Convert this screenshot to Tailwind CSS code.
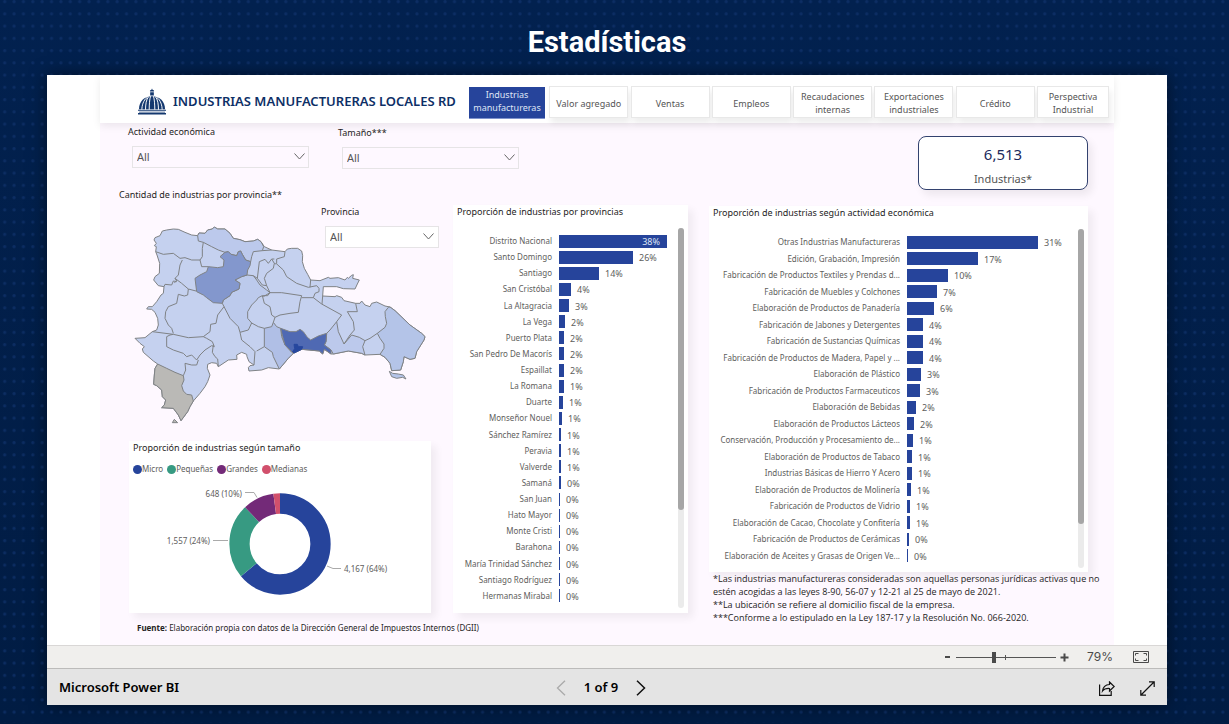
<!DOCTYPE html>
<html lang="es">

<head>
    <meta charset="UTF-8">
    <meta name="viewport" content="width=device-width, initial-scale=1.0">
    <title>Estadísticas</title>
    <script src="https://cdn.jsdelivr.net/npm/@tailwindcss/browser@4"></script>
</head>

<body class="bg-[#02204c] font-['Noto_Sans',sans-serif] text-[#252423]">

    <!-- dotted page background -->
    <svg class="absolute inset-0 -z-10 h-full w-full" aria-hidden="true">
        <defs>
            <linearGradient id="shade" x1="0" y1="0" x2="0" y2="1">
                <stop offset="0" stop-color="#02214f" />
                <stop offset="1" stop-color="#011c43" />
            </linearGradient>
            <pattern id="dots" width="9.37" height="12.25" patternUnits="userSpaceOnUse">
                <circle cx="4.7" cy="1.6" r="1.6" fill="#10316a" fill-opacity=".75" />
            </pattern>
        </defs>
        <rect width="100%" height="100%" fill="url(#shade)" />
        <rect width="100%" height="100%" fill="url(#dots)" y="-1" />
    </svg>

    <div class="min-h-screen pl-[47px] pr-[62px]">
        <h1 class="pt-6 pb-[15px] text-center font-[Roboto] text-[29px] leading-9 font-bold text-white">Estadísticas</h1>

        <div class="bg-white shadow-[0_0_16px_rgba(0,0,0,0.5)]">
            <div class="mx-[53px]">

                <!-- report header -->
                <header class="relative flex h-12 pl-[38px] pr-[5px] shadow-[0_3px_8px_rgba(0,0,0,0.08)]">
                    <svg class="mt-[13px] h-[27px] w-[28px] shrink-0" viewBox="0 0 29 27" fill="#14386f" aria-hidden="true">
                        <path d="M14.500 0l.7 1.300h-1.400zM12.400 2.200q2.100-1.600 4.200 0v1H12.400zM12.600 3.800h3.800v3.600h-3.800z" />
                        <path d="M1 21.500C1 13.500 6.500 8 14.500 8S28 13.500 28 21.500z" />
                        <path d="M0 22h29v1.200H0zM1 24h27v.8H1zM0 25.500h29V27H0z" />
                        <g fill="none" stroke="#fff" stroke-width="1">
                            <path d="M13 8C12 11 11.600 17 11.600 22M16 8c1 3 1.400 9 1.400 14" />
                            <path d="M11 8.500C8.500 11 7.800 17 7.800 22M18 8.500c2.500 2.500 3.200 8.500 3.200 13.500M9.500 9.300C5.500 12 4 18 4 22M19.500 9.300c4 2.700 5.500 8.700 5.500 12.700" />
                        </g>
                    </svg>
                    <h2 class="mt-4 ml-[7px] w-[296px] shrink-0 whitespace-nowrap text-[13px] leading-5 font-semibold text-[#0d2f66]">INDUSTRIAS MANUFACTURERAS LOCALES RD</h2>
                    <nav class="mt-[11px] flex h-8 flex-1 justify-between text-[9px] leading-[13px] text-[#555]">
                        <button class="mt-px mr-[2px] h-8 w-[76px] border-b border-[#7f93cc] bg-[#26449b] pb-1 text-[#dfe4f5]">Industrias<br>manufactureras</button>
                        <button class="w-[79px] border border-[#e8e8e8] bg-white pt-[2px] shadow-[2px_5px_6px_rgba(0,0,0,0.07)]">Valor agregado</button>
                        <button class="w-[79px] border border-[#e8e8e8] bg-white pt-[2px] shadow-[2px_5px_6px_rgba(0,0,0,0.07)]">Ventas</button>
                        <button class="w-[79px] border border-[#e8e8e8] bg-white pt-[2px] shadow-[2px_5px_6px_rgba(0,0,0,0.07)]">Empleos</button>
                        <button class="w-[79px] border border-[#e8e8e8] bg-white pt-[2px] shadow-[2px_5px_6px_rgba(0,0,0,0.07)]">Recaudaciones<br>internas</button>
                        <button class="w-[79px] border border-[#e8e8e8] bg-white pt-[2px] shadow-[2px_5px_6px_rgba(0,0,0,0.07)]">Exportaciones<br>industriales</button>
                        <button class="w-[79px] border border-[#e8e8e8] bg-white pt-[2px] shadow-[2px_5px_6px_rgba(0,0,0,0.07)]">Crédito</button>
                        <button class="w-[72px] border border-[#e8e8e8] bg-white pt-[2px] shadow-[2px_5px_6px_rgba(0,0,0,0.07)]">Perspectiva<br>Industrial</button>
                    </nav>
                </header>

                <main class="h-[522px] bg-[#fef8ff]">

                    <!-- filters and total -->
                    <div class="flex h-[67px] pl-7">
                        <div class="w-[210px] pt-[3px]">
                            <label for="actividad" class="block text-[9px] leading-3">Actividad económica</label>
                            <div class="relative mt-2 ml-1 w-[177px]">
                                <select id="actividad" class="block h-[22px] w-full appearance-none border border-[#e6e4e6] pl-1 text-[11px] text-[#555]"><option>All</option></select>
                                <svg class="pointer-events-none absolute top-[7px] right-1 h-[7px] w-[11px]" viewBox="0 0 11 7" fill="none" stroke="#666"><path d="M.5.5l5 5.500 5-5.500" /></svg>
                            </div>
                        </div>
                        <div class="pt-1">
                            <label for="tamano" class="block text-[9px] leading-3">Tamaño***</label>
                            <div class="relative mt-2 ml-1 w-[177px]">
                                <select id="tamano" class="block h-[22px] w-full appearance-none border border-[#e6e4e6] pl-1 text-[11px] text-[#555]"><option>All</option></select>
                                <svg class="pointer-events-none absolute top-[7px] right-1 h-[7px] w-[11px]" viewBox="0 0 11 7" fill="none" stroke="#666"><path d="M.5.5l5 5.500 5-5.500" /></svg>
                            </div>
                        </div>
                        <div class="mt-[13px] mr-[26px] ml-auto h-[54px] w-[170px] rounded-lg border border-[#33426f] bg-white pt-[7px] text-center shadow-[4px_5px_8px_rgba(0,0,0,0.07)]">
                            <p class="text-[15px] leading-5 text-[#1c2a5c]">6,513</p>
                            <p class="pt-[5px] text-[11px] leading-5 text-[#555]">Industrias*</p>
                        </div>
                    </div>

                    <div class="flex">

                        <!-- map, donut -->
                        <section class="w-[353px] shrink-0">
                            <h3 class="pl-[19px] text-[9px] leading-[10px]">Cantidad de industrias por provincia**</h3>
                            <div class="relative h-[241px] pt-[15px] pl-[25px]">
                                <svg class="h-[220px] w-[307px]" viewBox="0 0 921 660" stroke="#7f8285" stroke-width="3" stroke-linejoin="round" fill="none" role="img" aria-label="Mapa de provincias">
                                    <path fill="#c5d1ef" d="M92,110 94,95 88,92 94,85 87,75 90,68 105,62 112,48 125,45 145,42 160,43 180,52 200,60 218,62 222,54 240,55 248,45 262,42 268,36 278,42 300,42 315,55 325,70 345,74 360,80 385,78 398,73 408,80 418,95 440,105 480,110 487,102 500,100 518,100 530,108 533,122 532,140 538,160 548,178 557,195 585,197 610,187 615,190 640,188 660,195 667,187 670,190 680,181 685,179 683,190 703,195 697,207 690,222 655,221 635,215 595,215 593,243 630,245 635,242 650,247 657,257 692,265 705,265 710,258 720,270 735,275 740,265 755,261 780,273 795,276 810,287 855,330 890,355 900,365 897,375 875,410 870,430 855,433 837,425 835,440 827,465 800,467 795,445 780,427 765,418 720,420 710,415 670,408 625,417 618,417 598,403 593,417 583,408 555,405 530,403 505,415 490,430 463,462 430,458 410,465 372,468 370,458 375,452 387,450 372,440 366,425 365,418 350,412 335,420 336,433 310,435 280,455 275,445 260,443 248,448 247,460 255,480 248,500 240,515 225,535 205,558 195,575 188,590 168,617 160,600 145,580 110,578 118,570 122,555 112,545 110,525 95,512 86,508 88,480 90,460 98,447 85,438 55,412 52,402 58,395 45,385 30,370 60,368 82,350 95,345 100,330 98,310 90,292 80,283 65,282 70,275 82,275 95,260 108,240 115,235 117,215 100,212 86,195 90,185 103,175 104,145 96,120Z" />
                                    <!-- provinces with their own shade -->
                                    <path fill="#bcc9ec" d="M218,62 222,54 240,55 248,45 262,42 268,36 278,42 300,42 315,55 325,70 345,74 360,80 385,78 398,73 408,80 416,95 412,107 385,110 380,125 377,140 362,135 352,118 347,108 340,110 335,122 318,118 310,110 300,112 280,105 260,95 235,82 220,78Z" />
                                    <path fill="#bccaec" d="M366,180 385,182 395,195 405,210 425,225 435,233 428,242 412,242 400,248 395,255 380,270 368,290 368,310 380,324 370,345 345,352 340,335 315,310 297,275 292,265 295,255 315,242 320,232 342,222 345,205 330,195 350,185Z" />
                                    <path fill="#8397cd" d="M300,112 310,110 318,118 335,122 340,110 347,108 352,118 362,135 377,140 375,152 368,165 366,180 350,185 330,195 345,205 342,222 320,232 315,242 295,255 292,265 265,263 245,248 235,240 215,230 210,190 225,180 245,170 250,155 278,158 295,155 297,135 285,125Z" />
                                    <path fill="#b0bfe6" d="M445,322 455,335 467,340 470,365 480,390 500,412 505,415 490,430 463,462 445,425 442,412 418,395 418,340 440,335Z" />
                                    <path fill="#bcc9ec" d="M605,355 615,345 635,320 640,350 657,387 680,360 703,367 720,377 713,395 720,420 710,415 670,408 625,417 618,405 598,390 603,380Z" />
                                    <path fill="#b4c4e8" d="M790,277 795,276 810,287 855,330 890,355 900,365 897,375 875,410 870,430 855,433 837,425 835,440 827,465 800,467 795,445 780,427 765,418 777,400 777,387 765,370 757,355 780,337 785,325 781,305 780,290Z" />
                                    <path fill="#4f69b3" d="M467,340 495,350 513,350 525,343 535,350 547,367 557,375 580,363 605,355 603,380 598,390 618,405 618,417 598,403 593,417 583,408 530,403 505,415 500,410 480,390 473,365Z" />
                                    <path fill="#26479e" stroke="#26479e" d="M507,388 517,388 520,395 533,395 530,403 507,414 503,410 509,401Z" />
                                    <path fill="#bab9b6" d="M98,447 125,460 150,472 175,482 177,495 170,512 175,528 185,538 200,540 205,558 195,575 188,590 168,617 160,600 145,580 110,578 118,570 122,555 112,545 110,525 95,512 86,508 88,480 90,460ZM148,613 158,623 142,623Z" />
                                    <path fill="#b4c4e8" d="M793,469 803,475 820,477 835,480 843,492 833,487 815,490 800,485Z" />
                                    <!-- inner borders -->
                                    <path d="M92,110 115,118 145,115 165,130 180,128 200,135 225,135 232,125 232,100 235,82M172,135 165,150 160,180 150,190 155,198 148,203M117,215 120,208 140,210 145,198 155,200M150,190 170,205 190,222 213,228M225,135 230,155 250,155" />
                                    <path d="M190,222 188,240 178,243 160,238 155,265 130,275 122,290 120,310 130,330 140,340 145,355M82,350 145,358 190,368 235,365 255,350 257,328 273,325 278,300 297,275M145,358 135,360 125,365 125,395 145,405 175,415 185,425 200,420 215,435 225,420 240,405 260,392 268,395 262,380 245,370 235,365" />
                                    <path d="M265,390 262,412 270,425 278,432 280,455M220,435 215,450 200,450 180,445 182,465 175,482M345,352 350,375 375,395 390,410 388,435 387,450M380,324 400,335 418,340M395,408 418,395" />
                                    <path d="M412,242 418,265 435,275 440,300 450,307 445,322M415,245 435,233 470,233 530,242 525,260 520,292 495,295 465,300 450,307M480,110 478,125 455,132 455,145M403,140 400,165 397,190 412,210 425,212 418,190 425,175 445,160 448,145 440,132 430,145 420,133 403,140M448,145 453,147M425,212 435,233M412,107 440,105M385,182 397,190M448,132 440,132" />
                                    <path d="M453,145 475,165 485,185 515,205 550,217 575,212 582,220 582,230 570,235 565,248 530,248M557,195 555,217M565,248 590,267 650,300 635,320M593,243 591,267M657,387 675,360 688,345 685,320 667,290 697,290 692,265M720,377 735,370 757,355" />
                                </svg>
                                <div class="absolute top-[6px] left-[221px]">
                                    <label for="provincia" class="block text-[9px] leading-3">Provincia</label>
                                    <div class="relative mt-2 ml-1 w-[114px]">
                                        <select id="provincia" class="block h-[22px] w-full appearance-none border border-[#e6e4e6] bg-white pl-1 text-[11px] text-[#555]"><option>All</option></select>
                                        <svg class="pointer-events-none absolute top-[7px] right-[5px] h-[7px] w-[11px]" viewBox="0 0 11 7" fill="none" stroke="#666"><path d="M.5.5l5 5.500 5-5.500" /></svg>
                                    </div>
                                </div>
                            </div>

                            <div class="ml-[29px] h-[172px] w-[302px] bg-white pt-px shadow-[5px_5px_8px_rgba(0,0,0,0.06)]">
                                <h3 class="pl-1 text-[9px] leading-3">Proporción de industrias según tamaño</h3>
                                <ul class="mt-[9px] flex gap-1 pl-1 text-[8px] leading-3 text-[#605e5c]">
                                    <li class="flex items-center"><span class="size-[9px] rounded-full bg-[#26449b]"></span>Micro</li>
                                    <li class="flex items-center"><span class="size-[9px] rounded-full bg-[#379a82]"></span>Pequeñas</li>
                                    <li class="flex items-center"><span class="size-[9px] rounded-full bg-[#732a78]"></span>Grandes</li>
                                    <li class="flex items-center"><span class="size-[9px] rounded-full bg-[#d1506c]"></span>Medianas</li>
                                </ul>
                                <svg class="h-[134px] w-[302px]" viewBox="0 0 302 134" role="img" aria-label="Industrias según tamaño">
                                    <g fill="none" stroke-width="20.300" transform="rotate(-90 151 69)">
                                        <circle cx="151" cy="69" r="40.500" stroke="#26449b" pathLength="100" stroke-dasharray="64 36" />
                                        <circle cx="151" cy="69" r="40.500" stroke="#379a82" pathLength="100" stroke-dasharray="23.900 76.100" stroke-dashoffset="-64" />
                                        <circle cx="151" cy="69" r="40.500" stroke="#732a78" pathLength="100" stroke-dasharray="10 90" stroke-dashoffset="-87.900" />
                                        <circle cx="151" cy="69" r="40.500" stroke="#d1506c" pathLength="100" stroke-dasharray="2.100 97.900" stroke-dashoffset="-97.900" />
                                    </g>
                                    <g fill="none" stroke="#aaa">
                                        <path d="M116 17.500h9l3 5M84 65.500h15M198 91l6 2.500h8" />
                                    </g>
                                    <g fill="#605e5c" font-size="8">
                                        <text x="113" y="22" text-anchor="end">648 (10%)</text>
                                        <text x="81" y="69" text-anchor="end">1,557 (24%)</text>
                                        <text x="215" y="97">4,167 (64%)</text>
                                    </g>
                                </svg>
                            </div>
                            <p class="mt-[9px] pl-[37px] text-[8px] leading-3 whitespace-nowrap"><b>Fuente:</b> Elaboración propia con datos de la Dirección General de Impuestos Internos (DGII)</p>
                        </section>

                        <!-- industries by province -->
                        <section class="mt-[15px] flex h-[408px] w-[235px] shrink-0 bg-white shadow-[5px_5px_8px_rgba(0,0,0,0.06)]">
                            <div class="flex-1">
                                <h3 class="pt-px pl-1 text-[9px] leading-3 whitespace-nowrap">Proporción de industrias por provincias</h3>
                                <ul id="provincias" class="mt-[15px] flex h-[371px] flex-col"></ul>
                            </div>
                            <div class="mt-[23px] mr-1 h-[380px] w-[6px] rounded-full bg-[#ebebeb]">
                                <div class="h-[282px] rounded-full bg-[#a6a6a6]"></div>
                            </div>
                        </section>

                        <!-- industries by activity and notes -->
                        <section class="mt-4 ml-[21px]">
                            <div class="flex h-[366px] w-[379px] bg-white shadow-[5px_5px_8px_rgba(0,0,0,0.06)]">
                                <div class="flex-1">
                                    <h3 class="pt-px pl-1 text-[9px] leading-3 whitespace-nowrap">Proporción de industrias según actividad económica</h3>
                                    <ul id="actividades" class="mt-[15px] flex h-[330px] flex-col"></ul>
                                </div>
                                <div class="mt-[23px] mr-1 h-[339px] w-[6px] rounded-full bg-[#ebebeb]">
                                    <div class="h-[295px] rounded-full bg-[#a6a6a6]"></div>
                                </div>
                            </div>
                            <div class="pl-1 font-['Open_Sans',sans-serif] text-[9px] leading-[13px] whitespace-nowrap">
                                <p>*Las industrias manufactureras consideradas son aquellas personas jurídicas activas que no<br>estén acogidas a las leyes 8-90, 56-07 y 12-21 al 25 de mayo de 2021.</p>
                                <p>**La ubicación se refiere al domicilio fiscal de la empresa.</p>
                                <p>***Conforme a lo estipulado en la Ley 187-17 y la Resolución No. 066-2020.</p>
                            </div>
                        </section>
                    </div>
                </main>
            </div>

            <!-- zoom bar -->
            <div class="flex h-[23px] items-center justify-end border-t border-[#d9d7d6] bg-[#f0efed] pr-[18px] text-[#4a4a4a]">
                <button aria-label="Alejar"><svg class="h-[9px] w-[9px]" viewBox="0 0 9 9" stroke="#4a4a4a" stroke-width="2"><path d="M2 4h5" /></svg></button>
                <div class="relative mx-1 flex w-[100px] items-center">
                    <input type="range" aria-label="Zoom" min="0" max="100" value="38" class="h-3 w-full appearance-none bg-[linear-gradient(#555,#555)] bg-[length:100%_1px] bg-center bg-no-repeat [&::-webkit-slider-thumb]:h-[11px] [&::-webkit-slider-thumb]:w-1 [&::-webkit-slider-thumb]:appearance-none [&::-webkit-slider-thumb]:bg-[#4a4a4a]">
                    <span class="pointer-events-none absolute left-[49px] h-[5px] w-px bg-[#555]"></span>
                </div>
                <button aria-label="Acercar"><svg class="h-[9px] w-[9px]" viewBox="0 0 9 9" stroke="#4a4a4a" stroke-width="2"><path d="M.5 4.500h8M4.500.5v8" /></svg></button>
                <span class="w-11 text-right font-[Inter] text-[12px]">79%</span>
                <button class="ml-5" aria-label="Ajustar a la página"><svg class="h-3 w-4" viewBox="0 0 16 12" fill="none" stroke="#4a4a4a"><path d="M.5.5h15v11H.5zM2.500 4.500v-2h3M10.500 2.500h3v2M13.500 7.500v2h-3M5.500 9.500h-3v-2" /></svg></button>
            </div>

            <!-- footer -->
            <footer class="grid h-[37px] grid-cols-3 items-center border-t border-[#bcbbba] bg-[#e4e4e4] px-3 pt-[2px] text-black">
                <a href="#" class="text-[13px] font-semibold">Microsoft Power BI</a>
                <div class="flex items-center justify-center gap-[18px] pr-[12px]">
                    <button aria-label="Página anterior"><svg class="h-4 w-[10px]" viewBox="0 0 10 16" fill="none" stroke="#aaa" stroke-width="1.300"><path d="M9 .8L1.500 8 9 15.200" /></svg></button>
                    <span class="text-[13px] font-semibold">1 of 9</span>
                    <button aria-label="Página siguiente"><svg class="h-4 w-[10px]" viewBox="0 0 10 16" fill="none" stroke="#111" stroke-width="1.500"><path d="M1 .8L8.500 8 1 15.200" /></svg></button>
                </div>
                <div class="flex items-center justify-end gap-[25px]">
                    <button aria-label="Compartir"><svg class="h-[15px] w-4" viewBox="0 0 16 15" fill="none" stroke="#111" stroke-width="1.200"><path d="M.6 3.500v10.900h11.600V10M10.500 1l4.700 4.500-4.700 4.500V7.500C7 7.300 5 8 3.500 10 4 6 6.500 3.700 10.500 3.500z" /></svg></button>
                    <button aria-label="Pantalla completa"><svg class="h-[15px] w-[15px]" viewBox="0 0 15 15" fill="none" stroke="#111" stroke-width="1.200"><path d="M1 14L14 1M9 .8h5.200V6M.8 9v5.200H6" /></svg></button>
                </div>
            </footer>
        </div>
    </div>

    <script>

        // [name, percentage, bar width in px]
        const provincias = [
            ["Distrito Nacional", 38, 108],
            ["Santo Domingo", 26, 74],
            ["Santiago", 14, 40],
            ["San Cristóbal", 4, 12],
            ["La Altagracia", 3, 10],
            ["La Vega", 2, 6],
            ["Puerto Plata", 2, 5],
            ["San Pedro De Macorís", 2, 5],
            ["Espaillat", 2, 5],
            ["La Romana", 1, 5],
            ["Duarte", 1, 4],
            ["Monseñor Nouel", 1, 3],
            ["Sánchez Ramírez", 1, 2],
            ["Peravia", 1, 2],
            ["Valverde", 1, 2],
            ["Samaná", 0, 2],
            ["San Juan", 0, 1],
            ["Hato Mayor", 0, 1],
            ["Monte Cristi", 0, 1],
            ["Barahona", 0, 1],
            ["María Trinidad Sánchez", 0, 1],
            ["Santiago Rodríguez", 0, 1],
            ["Hermanas Mirabal", 0, 1]
        ];

        const actividades = [
            ["Otras Industrias Manufactureras", 31, 131],
            ["Edición, Grabación, Impresión", 17, 71],
            ["Fabricación de Productos Textiles y Prendas d...", 10, 41],
            ["Fabricación de Muebles y Colchones", 7, 30],
            ["Elaboración de Productos de Panadería", 6, 27],
            ["Fabricación de Jabones y Detergentes", 4, 16],
            ["Fabricación de Sustancias Químicas", 4, 16],
            ["Fabricación de Productos de Madera, Papel y ...", 4, 16],
            ["Elaboración de Plástico", 3, 14],
            ["Fabricación de Productos Farmaceuticos", 3, 13],
            ["Elaboración de Bebidas", 2, 9],
            ["Elaboración de Productos Lácteos", 2, 7],
            ["Conservación, Producción y Procesamiento de...", 1, 6],
            ["Elaboración de Productos de Tabaco", 1, 5],
            ["Industrias Básicas de Hierro Y Acero", 1, 5],
            ["Elaboración de Productos de Molinería", 1, 4],
            ["Fabricación de Productos de Vidrio", 1, 3],
            ["Elaboración de Cacao, Chocolate y Confitería", 1, 3],
            ["Fabricación de Productos de Cerámicas", 0, 2],
            ["Elaboración de Aceites y Grasas de Origen Ve...", 0, 1]
        ];

        // Fill one bar list; labelClass sets the width of the name column
        const showBars = (id, rows, labelClass) => {
            document.getElementById(id).innerHTML = rows.map(([name, pct, width]) => {
                // a bar near the edge carries its value inside
                const inside = pct > 35;
                return `
                    <li class="flex min-h-0 flex-1 items-center">
                        <span class="${labelClass}">${name}</span>
                        <span class="ml-[7px] flex h-[13px] items-center justify-end bg-[#26449b] text-[9px] leading-3 text-[#dfe4f5]" style="width:${width}px">${inside ? `<span class="pt-px pr-[7px]">${pct}%</span>` : ""}</span>
                        ${inside ? "" : `<span class="ml-[6px] pt-[2px] text-[9px] leading-3 text-[#605e5c]">${pct}%</span>`}
                    </li>`;
            }).join("");
        }

        showBars("provincias", provincias, "w-[99px] shrink-0 text-right text-[8px] leading-3 whitespace-nowrap text-[#605e5c]");
        showBars("actividades", actividades, "w-[191px] shrink-0 text-right text-[8px] leading-3 whitespace-nowrap text-[#605e5c]");

    </script>

</body>

</html>
